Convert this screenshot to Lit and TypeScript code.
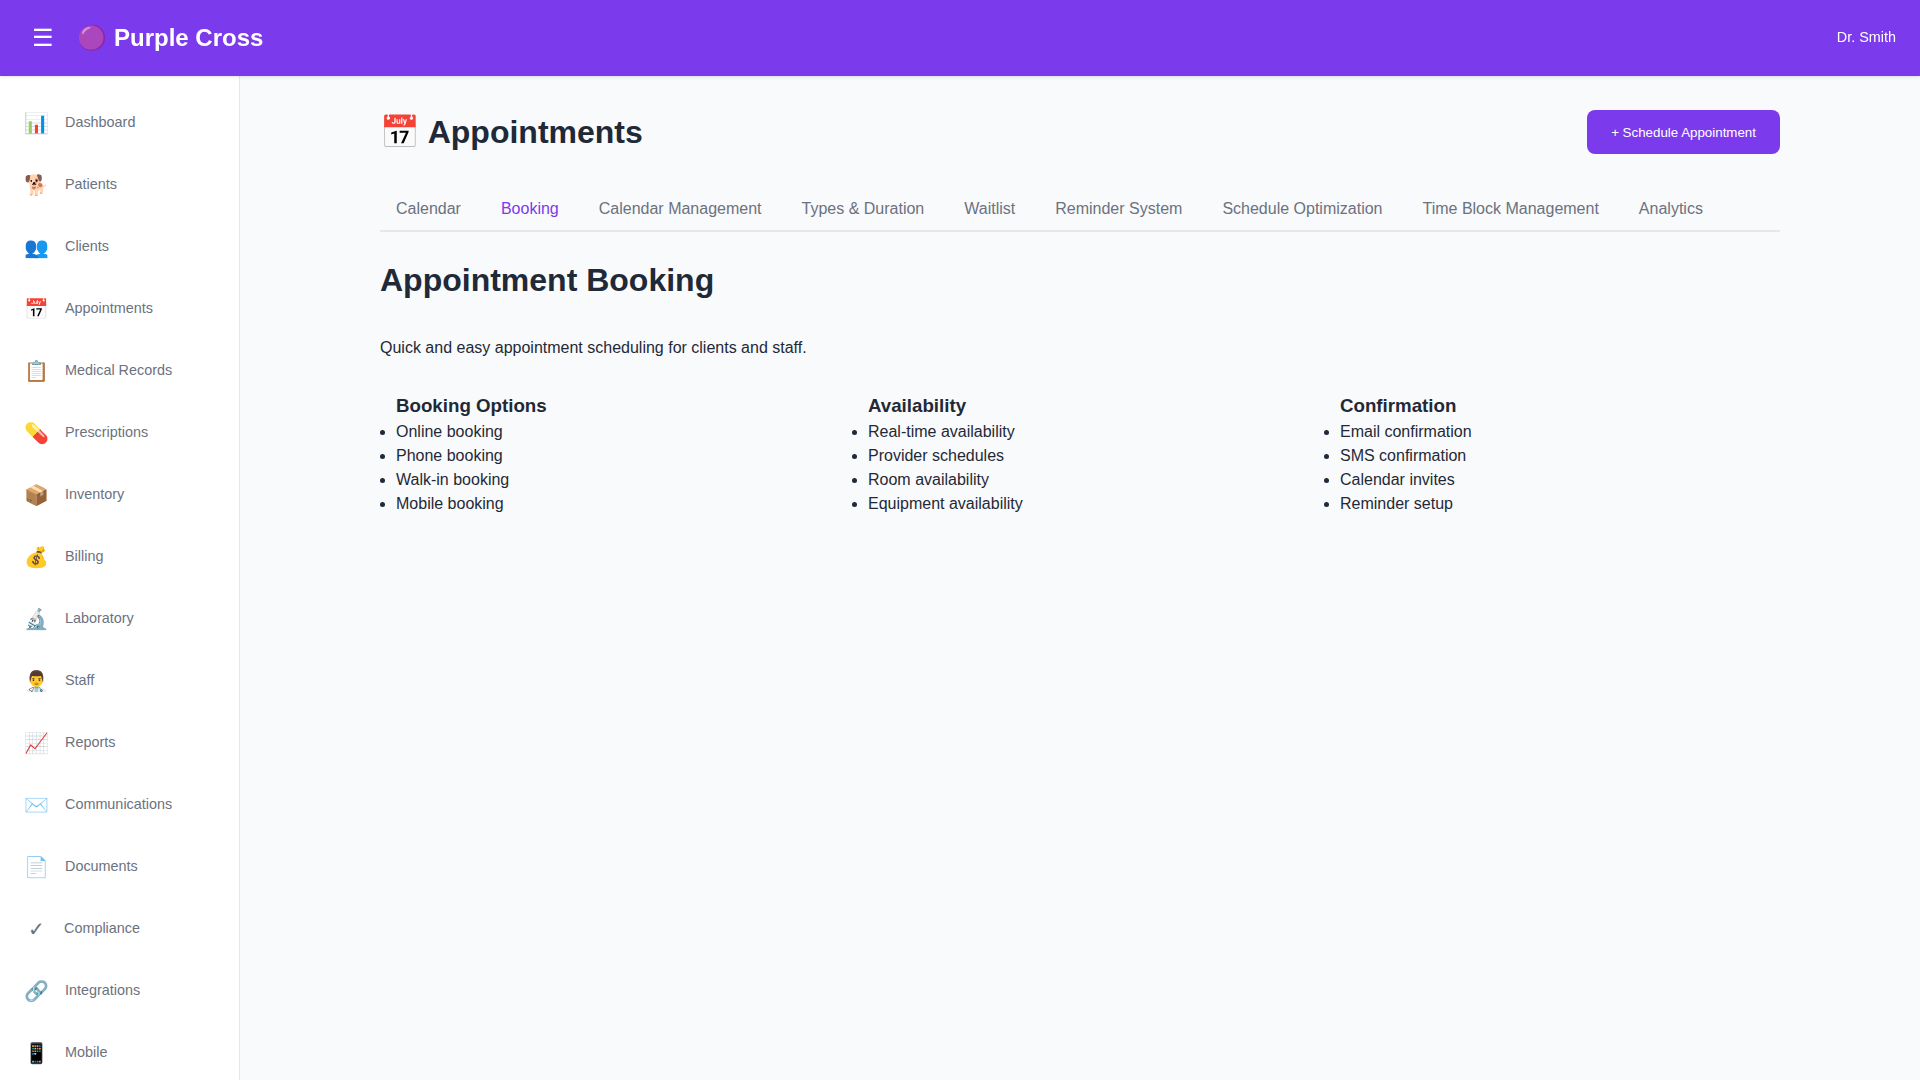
import { LitElement, html, css } from "lit";
import { customElement } from "lit/decorators.js";

const NAV: [string, string][] = [
  ["📊", "Dashboard"],
  ["🐕", "Patients"],
  ["👥", "Clients"],
  ["📅", "Appointments"],
  ["📋", "Medical Records"],
  ["💊", "Prescriptions"],
  ["📦", "Inventory"],
  ["💰", "Billing"],
  ["🔬", "Laboratory"],
  ["👨‍⚕️", "Staff"],
  ["📈", "Reports"],
  ["✉️", "Communications"],
  ["📄", "Documents"],
  ["✓", "Compliance"],
  ["🔗", "Integrations"],
  ["📱", "Mobile"],
];

const TABS = [
  "Calendar",
  "Booking",
  "Calendar Management",
  "Types & Duration",
  "Waitlist",
  "Reminder System",
  "Schedule Optimization",
  "Time Block Management",
  "Analytics",
];

const FEATURES = [
  { title: "Booking Options", items: ["Online booking", "Phone booking", "Walk-in booking", "Mobile booking"] },
  { title: "Availability", items: ["Real-time availability", "Provider schedules", "Room availability", "Equipment availability"] },
  { title: "Confirmation", items: ["Email confirmation", "SMS confirmation", "Calendar invites", "Reminder setup"] },
];

@customElement("app-root")
export class AppRoot extends LitElement {
  static styles = css`
    :host {
      display: flex;
      flex-direction: column;
      height: 100vh;
      overflow: hidden;
      background: #f9fafb;
      color: #1f2937;
      font-family: "Liberation Sans", Arial, sans-serif;
      font-size: 16px;
      line-height: 1.5;
    }
    * { box-sizing: border-box; margin: 0; padding: 0; }
    .header {
      flex: none;
      position: sticky;
      top: 0;
      z-index: 100;
      display: flex;
      align-items: center;
      justify-content: space-between;
      height: 76px;
      padding: 0 24px;
      background: #7c3aed;
      color: #fff;
      box-shadow: 0 1px 3px rgba(0, 0, 0, 0.12);
      will-change: transform;
    }
    .brand { display: flex; align-items: center; gap: 15.3px; }
    .toggle {
      border: 0;
      background: none;
      color: #fff;
      font: 24px "Liberation Sans", Arial, sans-serif;
      padding: 8px;
    }
    .logo { font-size: 24px; font-weight: 700; }
    .user { font-size: 14.4px; line-height: 22px; padding-bottom: 2px; }
    .body { flex: 1; display: flex; min-height: 0; }
    .sidebar {
      flex: none;
      width: 240px;
      padding: 16px 0;
      background: #fff;
      border-right: 1px solid #e5e7eb;
      overflow-y: auto;
      scrollbar-width: none;
    }
    .link {
      display: flex;
      align-items: center;
      gap: 16px;
      height: 62px;
      padding: 0 24px;
      color: #6b7280;
      font-size: 14.4px;
    }
    .icon { font-size: 20px; min-width: 24px; text-align: center; }
    .main { flex: 1; padding: 32px; min-width: 0; }
    .page { width: 1400px; margin: 0 auto; }
    .title-row { display: flex; align-items: center; justify-content: space-between; margin-bottom: 32px; }
    h1, h2 { font-size: 32px; line-height: 48px; }
    .primary {
      height: 44px;
      border: 0;
      border-radius: 8px;
      background: #7c3aed;
      color: #fff;
      padding: 0 24px;
      font: 13.333px "Liberation Sans", Arial, sans-serif;
    }
    .tabs { display: flex; gap: 8px; border-bottom: 2px solid #e5e7eb; margin-bottom: 24px; }
    .tab { padding: 12px 16px; line-height: 18px; color: #6b7280; }
    .tab.active { color: #7c3aed; }
    .intro { margin: 32px 0; }
    .features { display: grid; grid-template-columns: repeat(3, 1fr); gap: 16px; }
    .feature { padding-left: 16px; }
    h3 { font-size: 18.72px; line-height: 28px; }
    li { line-height: 24px; }
  `;

  render() {
    return html`
      <header class="header">
        <div class="brand">
          <button class="toggle">☰</button>
          <div class="logo">🟣 Purple Cross</div>
        </div>
        <span class="user">Dr. Smith</span>
      </header>
      <div class="body">
        <nav class="sidebar">
          ${NAV.map(([icon, label]) => html`<a class="link"><span class="icon">${icon}</span><span>${label}</span></a>`)}
        </nav>
        <main class="main">
          <div class="page">
            <div class="title-row">
              <h1>📅 Appointments</h1>
              <button class="primary">+ Schedule Appointment</button>
            </div>
            <div class="tabs">
              ${TABS.map((t) => html`<div class="tab ${t === "Booking" ? "active" : ""}">${t}</div>`)}
            </div>
            <h2>Appointment Booking</h2>
            <p class="intro">Quick and easy appointment scheduling for clients and staff.</p>
            <div class="features">
              ${FEATURES.map((f) => html`<section class="feature"><h3>${f.title}</h3><ul>${f.items.map((i) => html`<li>${i}</li>`)}</ul></section>`)}
            </div>
          </div>
        </main>
      </div>
    `;
  }
}
